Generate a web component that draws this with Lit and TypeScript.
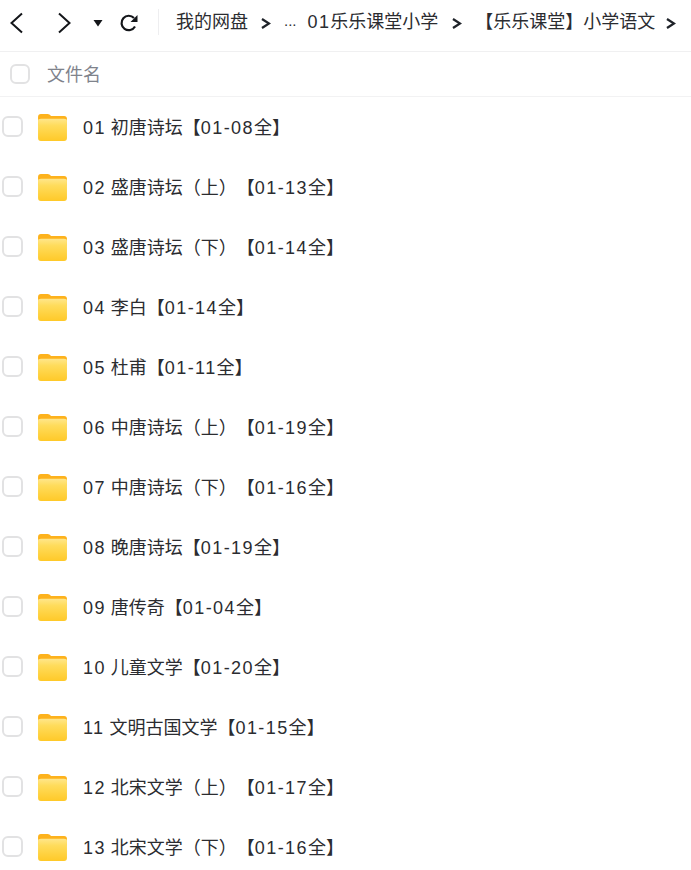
import { LitElement, html, css } from "lit";
import { customElement } from "lit/decorators.js";

const ROWS = [
  "01 初唐诗坛【01-08全】",
  "02 盛唐诗坛（上）【01-13全】",
  "03 盛唐诗坛（下）【01-14全】",
  "04 李白【01-14全】",
  "05 杜甫【01-11全】",
  "06 中唐诗坛（上）【01-19全】",
  "07 中唐诗坛（下）【01-16全】",
  "08 晚唐诗坛【01-19全】",
  "09 唐传奇【01-04全】",
  "10 儿童文学【01-20全】",
  "11 文明古国文学【01-15全】",
  "12 北宋文学（上）【01-17全】",
  "13 北宋文学（下）【01-16全】",
];

const chev = html`<svg viewBox="0 0 10 11" width="10" height="11"><path d="M1 1 8 5.5 1 10" fill="none" stroke="#1f2329" stroke-width="2.3"/></svg>`;

/* Digit runs are a little wider in the reference than in the CJK text around them. */
function styled(text: string) {
  return text.split(/([0-9-]+)/).map((part, i) =>
    i % 2 ? html`<span class="num">${part}</span>` : part
  );
}

@customElement("app-root")
export class AppRoot extends LitElement {
  static styles = css`
    :host { display: block; width: 691px; height: 870px; overflow: hidden; background: #fff;
      font-family: "Liberation Sans", "Noto Sans CJK SC", sans-serif; color: #2b2c30;
      text-spacing-trim: space-all; }
    .top { display: flex; align-items: center; height: 44px; padding-bottom: 7px; border-bottom: 1px solid #f0f0f1; white-space: nowrap; overflow: hidden; }
    .nav { display: flex; align-items: center; flex: none; margin-top: 2px; }
    .back { margin-left: 9px; }
    .fwd { margin-left: 33px; }
    .drop { margin-left: 21px; }
    .refresh { margin-left: 16px; }
    .divider { width: 1px; height: 26px; background: #eeeef0; margin: 0 17px 0 19px; flex: none; }
    .crumb { font-size: 18px; flex: none; margin-bottom: 4px; }
    .num { letter-spacing: 1.4px; }
    .sep { display: inline-flex; flex: none; margin-top: 3px; }
    .s1 { margin-left: 13px; margin-right: 13px; }
    .dots { font-size: 15px; margin-right: 11px; }
    .s2 { margin-left: 14px; margin-right: 13px; }
    .s3 { margin-left: 11px; }
    .head { display: flex; align-items: center; height: 44px; border-bottom: 1px solid #f2f2f3; padding-left: 10px; }
    .head span { margin-left: 17px; font-size: 18px; color: #7f838c; margin-bottom: 3px; }
    .box { width: 20px; height: 20px; box-sizing: border-box; border: 2px solid #e2e2e3; border-radius: 6px; flex: none; }
    .row { display: flex; align-items: center; height: 60px; padding-left: 2px; }
    .row .box { width: 21px; height: 21px; margin-top: -1px; }
    .folder { margin-left: 15px; flex: none; }
    .name { margin-left: 16px; font-size: 18px; white-space: nowrap; margin-bottom: 2px; }
  `;

  render() {
    return html`
      <div class="top">
        <div class="nav">
          <svg class="back" width="15" height="22" viewBox="0 0 15 22"><path d="M13 1.5 2.5 11 13 20.5" fill="none" stroke="#14161a" stroke-width="2"/></svg>
          <svg class="fwd" width="15" height="22" viewBox="0 0 15 22"><path d="M2 1.5 12.5 11 2 20.5" fill="none" stroke="#14161a" stroke-width="2"/></svg>
          <svg class="drop" width="10" height="8" viewBox="0 0 10 8"><path d="M0.5 1H9.5L5 7.5Z" fill="#14161a"/></svg>
          <svg class="refresh" width="20" height="20" viewBox="0 0 20 20"><path d="M16 13.5A7.2 7.2 0 1 1 15 5" fill="none" stroke="#14161a" stroke-width="2.2"/><path d="M18.5 2v7h-7Z" fill="#14161a"/></svg>
        </div>
        <div class="divider"></div>
        <span class="crumb">我的网盘</span><span class="sep s1">${chev}</span>
        <span class="crumb dots">...</span>
        <span class="crumb">${styled("01乐乐课堂小学")}</span><span class="sep s2">${chev}</span>
        <span class="crumb">【乐乐课堂】小学语文</span><span class="sep s3">${chev}</span>
      </div>
      <div class="head"><div class="box"></div><span>文件名</span></div>
      <div class="list">
        ${ROWS.map((r) => html`
          <div class="row">
            <div class="box"></div>
            <svg class="folder" width="29" height="27" viewBox="0 0 30 28">
              <defs><linearGradient id="f" x1="0" y1="0" x2="0" y2="1"><stop offset="0" stop-color="#ffe68a"/><stop offset="0.3" stop-color="#ffdc5c"/><stop offset="1" stop-color="#ffc928"/></linearGradient></defs>
              <path d="M0 3Q0 0 3 0H10Q12 0 13.5 2H27Q30 2 30 5V12H0Z" fill="#fdb21c"/>
              <path d="M0 7Q0 5 3 5H27Q30 5 30 7V25Q30 28 27 28H3Q0 28 0 25Z" fill="url(#f)"/>
            </svg>
            <span class="name">${styled(r)}</span>
          </div>`)}
      </div>
    `;
  }
}
